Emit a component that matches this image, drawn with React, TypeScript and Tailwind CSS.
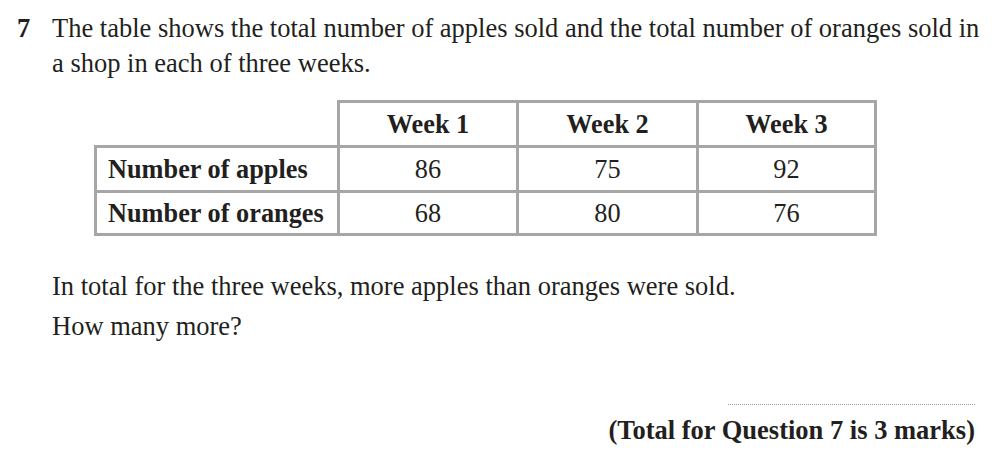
import React from "react";

const serif = { fontFamily: '"Liberation Serif", "Times New Roman", serif' };

export default function App() {
  const b = "border-[#a6a6a6] border-solid";
  return (
    <div
      className="w-[1000px] h-[457px] bg-white text-[#231f20] overflow-hidden"
      style={serif}
    >
      <div className="flex pt-[11px] text-[26.5px] leading-[35px]">
        <div className="w-[52px] pl-[17px] font-bold">7</div>
        <div className="flex-1">
          <div className="whitespace-nowrap">
            The table shows the total number of apples sold and the total number of oranges sold in
          </div>
          <div>a shop in each of three weeks.</div>
        </div>
      </div>

      <div className="ml-[94px] mt-[19px] grid grid-cols-[246px_179px_180px_178px] grid-rows-[48px_45px_43px] text-[26.3px] leading-none">
        <div className={`${b} border-r-[3px] border-b-[3px]`} />
        {["Week 1", "Week 2", "Week 3"].map((w) => (
          <div
            key={w}
            className={`${b} border-t-[3px] border-r-[3px] border-b-[3px] flex items-center justify-center pt-[2px] font-bold`}
          >
            {w}
          </div>
        ))}
        {[
          ["Number of apples", "86", "75", "92"],
          ["Number of oranges", "68", "80", "76"],
        ].map((row) => (
          <React.Fragment key={row[0]}>
            <div
              className={`${b} border-l-[3px] border-r-[3px] border-b-[3px] flex items-center pl-[11px] pt-[2px] font-bold whitespace-nowrap`}
            >
              {row[0]}
            </div>
            {row.slice(1).map((v, i) => (
              <div
                key={i}
                className={`${b} border-r-[3px] border-b-[3px] flex items-center justify-center pt-[2px]`}
              >
                {v}
              </div>
            ))}
          </React.Fragment>
        ))}
      </div>

      <div className="pl-[52px] mt-[30px] text-[26.5px] leading-[40px]">
        <div className="whitespace-nowrap">
          In total for the three weeks, more apples than oranges were sold.
        </div>
        <div className="whitespace-nowrap">How many more?</div>
      </div>

      <div className="flex justify-end pr-[25px] mt-[58px]">
        <div className="w-[247px] border-b border-dotted border-[#999]" />
      </div>
      <div className="flex justify-end pr-[25px] mt-[10px] text-[26.5px] leading-[30px] font-bold">
        (Total for Question 7 is 3 marks)
      </div>
    </div>
  );
}
